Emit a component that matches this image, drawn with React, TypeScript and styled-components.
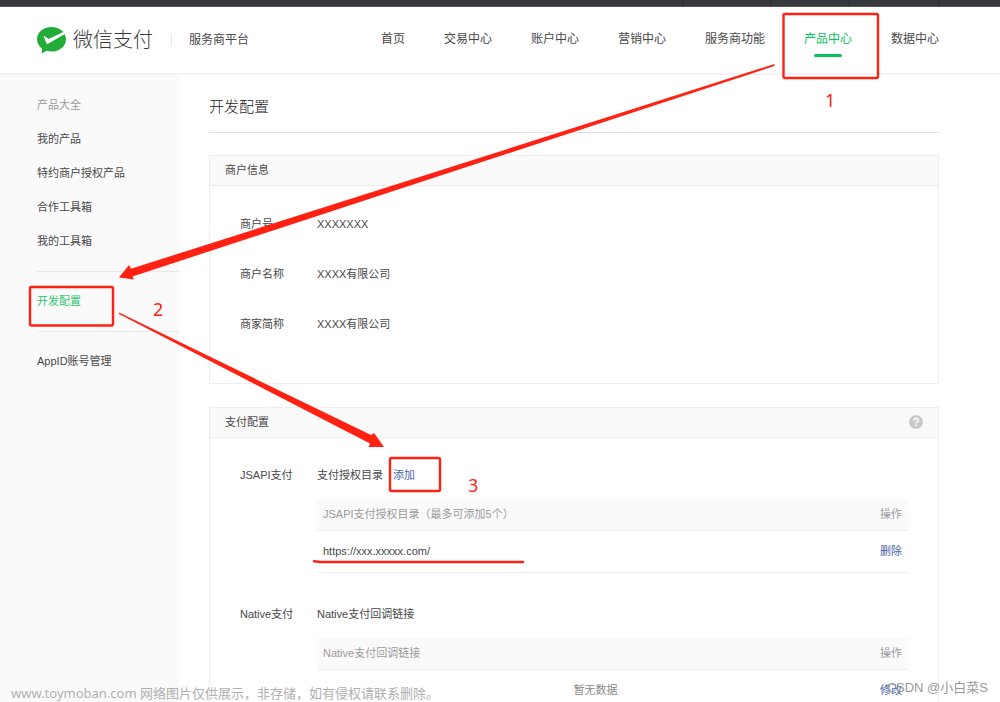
import React from 'react';
import styled, { createGlobalStyle } from 'styled-components';

const GlobalStyle = createGlobalStyle`
  *, *::before, *::after { box-sizing: border-box; }
  body {
    margin: 0;
    background: #fff;
    color: #484848;
    font: 11px/16px "Liberation Sans", "Noto Sans CJK SC", sans-serif;
  }
  a { color: inherit; text-decoration: none; }
  ul, dl, dd, h1, h2, h3 { margin: 0; padding: 0; font-weight: inherit; }
  ul { list-style: none; }
`;

const Page = styled.div`
  position: relative;
  display: flex;
  flex-direction: column;
  height: 100vh;
  overflow: hidden;
`;

const TopStrip = styled.div`
  flex: none;
  display: flex;
  justify-content: flex-end;
  height: 7px;
  background: #38393f;
  border-bottom: 1px solid #55545a;
`;

const StripCell = styled.span<{ $width: number }>`
  width: ${(p) => p.$width}px;
  border-left: 1px solid #2c2d31;
`;

const Header = styled.header`
  flex: none;
  display: flex;
  align-items: center;
  height: 68px;
  padding: 0 61px 0 37px;
  border-bottom: 2px solid #f2f2f6;
  font-size: 12px;
`;

const Brand = styled.a`
  display: flex;
  align-items: center;
  gap: 7px;
  font-size: 20px;
  line-height: 28px;
  font-weight: 300;
  color: #3c3c3c;
`;

const Platform = styled.span`
  margin-left: 18px;
  padding-left: 17px;
  border-left: 1px solid #e9e9e9;
  line-height: 12px;
`;

const Nav = styled.nav`
  display: flex;
  gap: 39px;
  margin-left: auto;
  padding-bottom: 2px;
`;

const NavLink = styled.a<{ $active?: boolean }>`
  position: relative;
  color: ${(p) => (p.$active ? '#07c160' : 'inherit')};
  &::after {
    content: '';
    display: ${(p) => (p.$active ? 'block' : 'none')};
    position: absolute;
    left: 50%;
    bottom: -10px;
    width: 28px;
    height: 3px;
    margin-left: -14px;
    border-radius: 2px;
    background: #07c160;
  }
`;

const Body = styled.div`
  flex: 1;
  display: flex;
  min-height: 0;
`;

const Sidebar = styled.aside`
  flex: none;
  width: 179px;
  padding: 13px 0 0 37px;
  background: #fafafa;
`;

const SideGroup = styled.ul`
  & + & {
    border-top: 1px solid #e9e9e9;
  }
  &:first-child {
    padding-bottom: 13px;
  }
  &:not(:first-child) {
    padding: 12px 0 13px;
  }
`;

const SideItem = styled.li<{ $tone?: 'muted' | 'active' }>`
  line-height: 34px;
  color: ${(p) => (p.$tone === 'muted' ? '#9a9a9a' : p.$tone === 'active' ? '#2dc56c' : 'inherit')};
`;

const Main = styled.main`
  flex: 1;
  min-width: 0;
  padding: 0 61px 0 30px;
`;

const Title = styled.h1`
  padding: 20px 0 13px;
  margin-bottom: 22px;
  border-bottom: 1px solid #e3e3e3;
  font-size: 15px;
  line-height: 24px;
  font-weight: 300;
  color: #222;
`;

const Panel = styled.section`
  margin-bottom: 23px;
  border: 1px solid #eee;
`;

const PanelHead = styled.header`
  display: flex;
  align-items: center;
  justify-content: space-between;
  height: 30px;
  padding: 0 15px 2px;
  background: #fafafa;
  border-bottom: 1px solid #eee;
`;

const PanelTitle = styled.h2`
  font-size: 11px;
`;

const HelpButton = styled.button`
  display: flex;
  padding: 0;
  border: 0;
  background: none;
`;

const InfoList = styled.dl`
  display: grid;
  grid-template-columns: 77px 1fr;
  row-gap: 34px;
  padding: 30px 30px 51px;
`;

const Config = styled.div`
  display: grid;
  grid-template-columns: 77px 1fr;
  padding: 29px 30px 33px;
  & + & {
    padding-top: 0;
  }
`;

const ConfigHead = styled.h3`
  display: flex;
  gap: 10px;
  margin-bottom: 16px;
  font-size: 11px;
`;

const Action = styled.a`
  color: #4a64ad;
`;

const Table = styled.table`
  width: 100%;
  border-collapse: separate;
  border-spacing: 0;
  text-align: left;
  th, td {
    padding: 0 6px 1px;
    border-bottom: 1px solid #eee;
  }
  th {
    height: 32px;
    background: #fafafa;
    color: #9a9a9a;
    font-weight: inherit;
  }
  td {
    height: 42px;
  }
  th:last-child, td:last-child {
    width: 34px;
    white-space: nowrap;
    text-align: right;
  }
`;

const EmptyCell = styled.td`
  color: #8a8a8a;
  text-align: center;
`;

const Annotations = styled.svg`
  position: absolute;
  left: 0;
  top: 0;
  pointer-events: none;
`;

const StepNumber = styled.span<{ $x: number; $y: number }>`
  position: absolute;
  left: ${(p) => p.$x}px;
  top: ${(p) => p.$y}px;
  font: 18px/24px "Noto Sans", sans-serif;
  color: #ff2213;
`;

const SourceNote = styled.p`
  position: absolute;
  left: 11px;
  bottom: 0;
  margin: 0;
  font: 13px/18px "Noto Sans", "Noto Sans CJK SC", sans-serif;
  color: #b0b0b0;
`;

const AuthorMark = styled.p`
  position: absolute;
  right: 12px;
  bottom: 5px;
  margin: 0;
  font: 13px/18px "Liberation Sans", "Noto Sans CJK SC", sans-serif;
  color: #999;
`;

const navItems = ['首页', '交易中心', '账户中心', '营销中心', '服务商功能', '产品中心', '数据中心'];
const productItems = ['我的产品', '特约商户授权产品', '合作工具箱', '我的工具箱'];
const merchant = [
  ['商户号', 'XXXXXXX'],
  ['商户名称', 'XXXX有限公司'],
  ['商家简称', 'XXXX有限公司'],
];

function PayLogo() {
  return (
    <svg width="29" height="27" viewBox="0 0 29 27" aria-hidden="true">
      <path
        fill="#22ac38"
        d="M14.500 0C6.500 0 0 5.300 0 12.200c0 3.900 2 7.200 5 9.500L4.800 26.500l4.700-2.700c1.600.5 3.300.8 5 .8 8 0 14.500-5.500 14.500-12.400S22.500 0 14.500 0z"
      />
      <path fill="#fff" d="M7.600 9.200 11.700 12 26.300 5 28 7 11 16.700c-.8.400-1.400.2-1.700-.6L6.800 10c-.3-.7.200-1.200.8-.8z" />
    </svg>
  );
}

function HelpIcon() {
  return (
    <svg width="14" height="14" viewBox="0 0 14 14" aria-hidden="true">
      <circle cx="7" cy="7" r="7" fill="#c9c9c9" />
      <path d="M4.900 5.500c0-1.400.9-2.200 2.200-2.200 1.200 0 2.100.8 2.100 1.900 0 1.600-2.100 1.700-2.100 3.200" fill="none" stroke="#fff" strokeWidth="1.500" />
      <rect x="6.300" y="9.400" width="1.600" height="1.600" fill="#fff" />
    </svg>
  );
}

export default function App() {
  return (
    <Page>
      <GlobalStyle />
      <TopStrip>
        <StripCell $width={88} />
        <StripCell $width={79} />
        <StripCell $width={89} />
        <StripCell $width={62} />
      </TopStrip>
      <Header>
        <Brand href="#">
          <PayLogo />
          微信支付
        </Brand>
        <Platform>服务商平台</Platform>
        <Nav>
          {navItems.map((item) => (
            <NavLink key={item} href="#" $active={item === '产品中心'}>
              {item}
            </NavLink>
          ))}
        </Nav>
      </Header>
      <Body>
        <Sidebar>
          <SideGroup>
            <SideItem $tone="muted">产品大全</SideItem>
            {productItems.map((item) => (
              <SideItem key={item}>
                <a href="#">{item}</a>
              </SideItem>
            ))}
          </SideGroup>
          <SideGroup>
            <SideItem $tone="active">
              <a href="#">开发配置</a>
            </SideItem>
          </SideGroup>
          <SideGroup>
            <SideItem>
              <a href="#">AppID账号管理</a>
            </SideItem>
          </SideGroup>
        </Sidebar>
        <Main>
          <Title>开发配置</Title>
          <Panel>
            <PanelHead>
              <PanelTitle>商户信息</PanelTitle>
            </PanelHead>
            <InfoList>
              {merchant.map(([label, value]) => (
                <React.Fragment key={label}>
                  <dt>{label}</dt>
                  <dd>{value}</dd>
                </React.Fragment>
              ))}
            </InfoList>
          </Panel>
          <Panel>
            <PanelHead>
              <PanelTitle>支付配置</PanelTitle>
              <HelpButton type="button" aria-label="帮助">
                <HelpIcon />
              </HelpButton>
            </PanelHead>
            <Config>
              <span>JSAPI支付</span>
              <div>
                <ConfigHead>
                  支付授权目录
                  <Action href="#">添加</Action>
                </ConfigHead>
                <Table>
                  <thead>
                    <tr>
                      <th>JSAPI支付授权目录（最多可添加5个）</th>
                      <th>操作</th>
                    </tr>
                  </thead>
                  <tbody>
                    <tr>
                      <td>https://xxx.xxxxx.com/</td>
                      <td>
                        <Action href="#">删除</Action>
                      </td>
                    </tr>
                  </tbody>
                </Table>
              </div>
            </Config>
            <Config>
              <span>Native支付</span>
              <div>
                <ConfigHead>Native支付回调链接</ConfigHead>
                <Table>
                  <thead>
                    <tr>
                      <th>Native支付回调链接</th>
                      <th>操作</th>
                    </tr>
                  </thead>
                  <tbody>
                    <tr>
                      <EmptyCell>暂无数据</EmptyCell>
                      <td>
                        <Action href="#">修改</Action>
                      </td>
                    </tr>
                  </tbody>
                </Table>
              </div>
            </Config>
          </Panel>
        </Main>
      </Body>
      <Annotations width="1000" height="702" viewBox="0 0 1000 702" aria-hidden="true">
        <g fill="none" stroke="#ff2213" strokeWidth="2.400">
          <rect x="783.500" y="14" width="94.500" height="64" rx="1.500" />
          <rect x="30" y="287" width="83" height="38.500" rx="1.500" />
          <rect x="390" y="458" width="50" height="33" rx="1.500" />
          <path d="M314 561.300 320 562H523" strokeLinecap="round" />
        </g>
        <g fill="#ff2213">
          <path d="M774.500 64 131 268.700 129 265 119 277.500 134 279.500 132.500 276.500 774.500 66z" />
          <path d="M119 312.500 371 435 374 433 384 447 368.500 447 370 443.500 119 314z" />
        </g>
      </Annotations>
      <StepNumber $x={825} $y={88}>1</StepNumber>
      <StepNumber $x={153} $y={297}>2</StepNumber>
      <StepNumber $x={468} $y={473}>3</StepNumber>
      <SourceNote>www.toymoban.com 网络图片仅供展示，非存储，如有侵权请联系删除。</SourceNote>
      <AuthorMark>CSDN @小白菜S</AuthorMark>
    </Page>
  );
}
